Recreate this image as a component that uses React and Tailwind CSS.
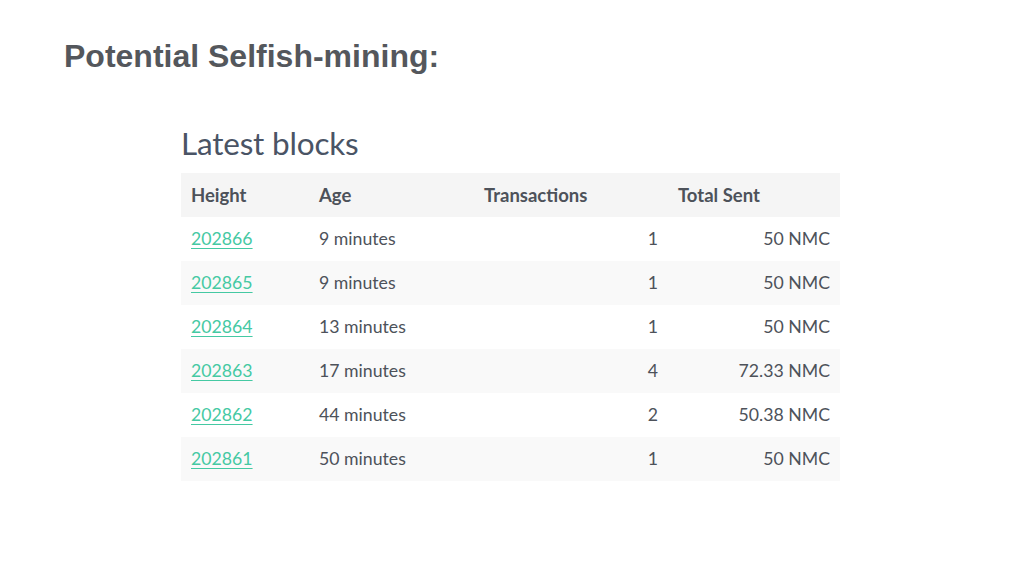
import React from 'react';

const rows = [
  { height: '202866', age: '9 minutes', tx: '1', sent: '50 NMC' },
  { height: '202865', age: '9 minutes', tx: '1', sent: '50 NMC' },
  { height: '202864', age: '13 minutes', tx: '1', sent: '50 NMC' },
  { height: '202863', age: '17 minutes', tx: '4', sent: '72.33 NMC' },
  { height: '202862', age: '44 minutes', tx: '2', sent: '50.38 NMC' },
  { height: '202861', age: '50 minutes', tx: '1', sent: '50 NMC' },
];

export default function App() {
  return (
    <div className="w-[1024px] h-[576px] bg-white overflow-hidden">
      {/* Slide title */}
      <h1 className="pl-[64px] pt-[38px] text-[32px] leading-[36px] font-bold text-[#54575c] font-['Liberation_Sans',Arial,sans-serif]">
        Potential Selfish-mining:
      </h1>

      {/* Screenshot of block table */}
      <div className="ml-[181px] mt-[50px] w-[659px] font-['Lato','Open_Sans',sans-serif] text-[#4d525a]">
        <h2 className="text-[31.5px] leading-[38px] text-[#4a5465] tracking-[-0.2px] pb-[11px]">Latest blocks</h2>
        <table className="w-full border-collapse text-[17.7px]">
          <thead>
            <tr className="bg-[#f5f5f5] h-[44px] text-[18.5px]">
              <th className="w-[128px] text-left font-bold px-[10px] pt-[1px]">Height</th>
              <th className="w-[165px] text-left font-bold px-[10px] pt-[1px]">Age</th>
              <th className="w-[194px] text-left font-bold px-[10px] pt-[1px]">Transactions</th>
              <th className="text-left font-bold px-[10px] pt-[1px]">Total Sent</th>
            </tr>
          </thead>
          <tbody>
            {rows.map((r, i) => (
              <tr key={r.height} className={i % 2 === 1 ? 'bg-[#f9f9f9] h-[44px]' : 'bg-white h-[44px]'}>
                <td className="px-[10px] pt-[1px]">
                  <a href="#" className="text-[#45c9a3] underline underline-offset-[3px]">{r.height}</a>
                </td>
                <td className="px-[10px] pt-[1px]">{r.age}</td>
                <td className="px-[10px] pt-[1px] text-right">{r.tx}</td>
                <td className="px-[10px] pt-[1px] text-right">{r.sent}</td>
              </tr>
            ))}
          </tbody>
        </table>
      </div>
    </div>
  );
}
